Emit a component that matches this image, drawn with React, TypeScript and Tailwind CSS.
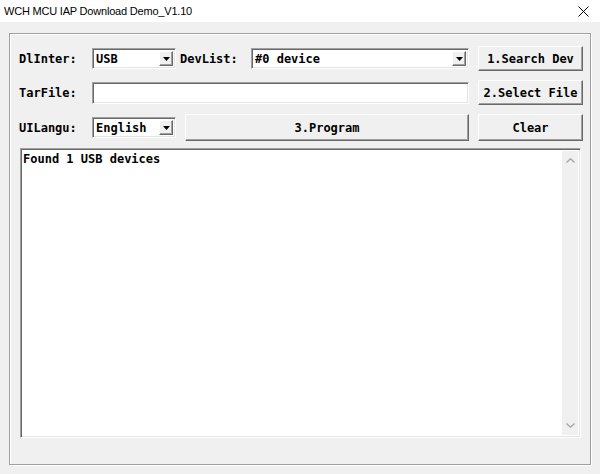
import React from "react";

const mono = "font-['DejaVu_Sans_Mono',monospace] font-bold text-[12px] text-black";
const raised =
  "border border-t-white border-l-white border-b-[#696969] border-r-[#696969] shadow-[inset_-1px_-1px_0_#a0a0a0] bg-[#f0f0f0]";
const sunken =
  "border border-t-[#a0a0a0] border-l-[#a0a0a0] border-b-white border-r-white shadow-[inset_1px_1px_0_#696969,inset_-1px_-1px_0_#e3e3e3] bg-white";

function Label({ text, width }: { text: string; width: string }) {
  return <div className={`${mono} ${width} shrink-0 leading-none`}>{text}</div>;
}

function Button({ text, width }: { text: string; width: string }) {
  return (
    <div className={`${raised} ${mono} ${width} h-full flex items-center justify-center shrink-0`}>
      {text}
    </div>
  );
}

function Combo({ value, width, height }: { value: string; width: string; height: string }) {
  return (
    <div className={`${sunken} ${width} ${height} shrink-0 flex items-stretch p-[2px]`}>
      <div className={`${mono} flex-1 flex items-center pl-[1px] leading-none`}>{value}</div>
      <div className={`${raised} w-[14px] flex items-center justify-center`}>
        <svg width="7" height="4" viewBox="0 0 7 4">
          <path d="M0 0h7L3.5 4z" fill="#000" />
        </svg>
      </div>
    </div>
  );
}

export default function App() {
  return (
    <div className="w-[600px] h-[474px] flex flex-col bg-[#f0f0f0] overflow-hidden">
      <div className="h-[22px] bg-white flex items-center justify-between pl-[4px] pr-[11px]">
        <span className="font-['Liberation_Sans',sans-serif] text-[11px] tracking-[-0.2px] text-black">
          WCH MCU IAP Download Demo_V1.10
        </span>
        <svg width="11" height="11" viewBox="0 0 11 11">
          <path d="M0.5 0.5l10 10M10.5 0.5l-10 10" stroke="#000" strokeWidth="1" />
        </svg>
      </div>

      <div className="flex-1 pt-[11px] px-[9px] pb-[9px]">
        <div className="h-full border border-[#a0a0a0] shadow-[inset_1px_1px_0_#fff,1px_1px_0_#fff] pl-[9px] pr-[6px] pt-[12px] flex flex-col">
          <div className="h-[25px] flex items-center">
            <Label text="DlInter:" width="w-[73px]" />
            <Combo value="USB" width="w-[84px]" height="h-[21px]" />
            <div className="w-[4px]" />
            <Label text="DevList:" width="w-[71px]" />
            <Combo value="#0 device" width="w-[218px]" height="h-[21px]" />
            <div className="w-[9px]" />
            <Button text="1.Search Dev" width="w-[105px]" />
          </div>

          <div className="h-[25px] mt-[9px] flex items-center">
            <Label text="TarFile:" width="w-[73px]" />
            <div className={`${sunken} w-[377px] h-[22px] shrink-0`} />
            <div className="w-[9px]" />
            <Button text="2.Select File" width="w-[105px]" />
          </div>

          <div className="h-[27px] mt-[9px] flex items-center">
            <Label text="UILangu:" width="w-[73px]" />
            <Combo value="English" width="w-[84px]" height="h-[21px]" />
            <div className="w-[9px]" />
            <Button text="3.Program" width="w-[284px]" />
            <div className="w-[9px]" />
            <Button text="Clear" width="w-[105px]" />
          </div>

          <div className={`${sunken} mt-[7px] ml-[1px] w-[561px] h-[290px] flex`}>
            <div className={`${mono} flex-1 pl-[2px] pt-[2px] leading-[16px]`}>Found 1 USB devices</div>
            <div className="w-[16px] my-[2px] mr-[2px] bg-[#f0f0f0] flex flex-col justify-between items-center py-[7px]">
              <svg width="9" height="5" viewBox="0 0 9 5">
                <path d="M0.5 4.5L4.5 0.8L8.5 4.5" stroke="#a3a3a3" strokeWidth="1.3" fill="none" />
              </svg>
              <svg width="9" height="5" viewBox="0 0 9 5">
                <path d="M0.5 0.5L4.5 4.2L8.5 0.5" stroke="#a3a3a3" strokeWidth="1.3" fill="none" />
              </svg>
            </div>
          </div>
        </div>
      </div>
    </div>
  );
}
